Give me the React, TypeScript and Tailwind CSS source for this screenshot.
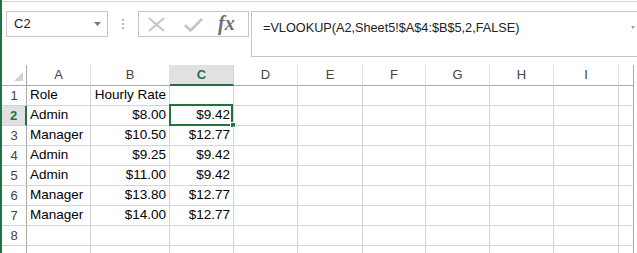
import React from 'react';

const COLS = ['A', 'B', 'C', 'D', 'E', 'F', 'G', 'H', 'I', ''];

const ROWS: Array<[string, string, string]> = [
  ['Role', 'Hourly Rate', ''],
  ['Admin', '$8.00', '$9.42'],
  ['Manager', '$10.50', '$12.77'],
  ['Admin', '$9.25', '$9.42'],
  ['Admin', '$11.00', '$9.42'],
  ['Manager', '$13.80', '$12.77'],
  ['Manager', '$14.00', '$12.77'],
  ['', '', ''],
  ['', '', ''],
];

const cellFont = { fontFamily: '"Liberation Sans", Arial, sans-serif' };

const FormulaBar = () => (
  <div className="flex items-start pt-[9px] h-[64px] border-t border-[#d5d5d5]">
    {/* name box */}
    <div className="ml-[4px] w-[102px] h-[26px] border border-[#c6c6c6] flex items-center justify-between pl-[7px] pr-[6px]">
      <span className="text-[13px] text-[#222]" style={cellFont}>C2</span>
      <svg width="7" height="4" viewBox="0 0 7 4">
        <path d="M0 0 L7 0 L3.5 4 Z" fill="#777" />
      </svg>
    </div>
    {/* grip dots */}
    <div className="ml-[14px] h-[26px] flex flex-col justify-center gap-[2px]">
      <div className="w-[2px] h-[2px] bg-[#b5b5b5]" />
      <div className="w-[2px] h-[2px] bg-[#b5b5b5]" />
      <div className="w-[2px] h-[2px] bg-[#b5b5b5]" />
    </div>
    {/* cancel / enter / fx */}
    <div className="ml-[14px] w-[111px] h-[26px] border border-[#c6c6c6] flex items-center">
      <svg className="ml-[9px]" width="17" height="15" viewBox="0 0 17 15">
        <path d="M1 1 L16 14 M16 1 L1 14" stroke="#c4c4c4" strokeWidth="2" fill="none" />
      </svg>
      <svg className="ml-[19px]" width="19" height="15" viewBox="0 0 19 15">
        <path d="M1 8 L6.5 13.5 L18 2" stroke="#c4c4c4" strokeWidth="2.6" fill="none" />
      </svg>
      <span
        className="ml-[15px] -mt-[2px] text-[20px] italic font-bold text-[#6f6f6f] leading-none"
        style={{ fontFamily: '"Liberation Serif", "Times New Roman", serif' }}
      >
        fx
      </span>
    </div>
    {/* formula */}
    <div className="ml-[2px] flex-1 h-[46px] border border-[#c6c6c6] border-r-0 relative">
      <div className="pl-[11px] pt-[7px] text-[12.7px] text-[#222]" style={cellFont}>
        =VLOOKUP(A2,Sheet5!$A$4:$B$5,2,FALSE)
      </div>
      <svg className="absolute right-[2px] top-[14px]" width="4" height="3" viewBox="0 0 4 3">
        <path d="M0 0 L4 0 L2 3 Z" fill="#999" />
      </svg>
    </div>
  </div>
);

const App = () => {
  return (
    <div className="w-[637px] h-[253px] bg-white border-l-2 border-[#217346] overflow-hidden pt-[1px]">
      <FormulaBar />
      <div
        className="grid grid-cols-[25px_64px_79px_64px_64px_65px_63px_64px_64px_65px_15px] text-[13.5px] text-black"
        style={cellFont}
      >
        {/* header row */}
        <div className="h-[21px] border-r border-b border-[#ababab] relative">
          <svg className="absolute right-[3px] bottom-[4px]" width="9" height="9" viewBox="0 0 9 9">
            <path d="M9 0 L9 9 L0 9 Z" fill="#d4d4d4" />
          </svg>
        </div>
        {COLS.map((c, i) => (
          <div
            key={'h' + i}
            className={
              c === 'C'
                ? 'h-[21px] bg-[#e1e1e1] border-r border-[#d4d4d4] border-b-2 border-b-[#217346] flex items-center justify-center text-[#217346] font-bold text-[13px]'
                : i === 9
                  ? 'h-[21px] border-r border-[#ababab] border-b border-b-[#ababab]'
                  : 'h-[21px] border-r border-[#e1e1e1] border-b border-b-[#ababab] flex items-center justify-center text-[#444] text-[13px]'
            }
          >
            {c}
          </div>
        ))}
        {/* data rows; the ninth row is only partly in view */}
        {ROWS.map((r, ri) => {
          const sel = ri === 1;
          return (
            <React.Fragment key={'r' + ri}>
              <div
                className={
                  sel
                    ? 'h-[20px] bg-[#e1e1e1] border-r-2 border-[#217346] border-b border-b-[#d4d4d4] flex items-center justify-center text-[#217346] font-bold text-[13px]'
                    : 'h-[20px] border-r border-[#ababab] border-b border-b-[#d4d4d4] flex items-center justify-center text-[#444] text-[13px]'
                }
              >
                {ri < 8 ? ri + 1 : ''}
              </div>
              <div className="h-[20px] border-r border-b border-[#d4d4d4] flex items-center pl-[3px]">{r[0]}</div>
              <div className="h-[20px] border-r border-b border-[#d4d4d4] flex items-center justify-end pr-[3px]">{r[1]}</div>
              <div className="h-[20px] border-r border-b border-[#d4d4d4] flex items-center justify-end pr-[3px] relative">
                {r[2]}
                {sel && (
                  <>
                    <div className="absolute -left-[1px] -top-[2px] right-0 -bottom-[1px] border-2 border-[#217346]" />
                    <div className="absolute -right-[3px] -bottom-[3px] w-[6px] h-[6px] bg-[#217346] border border-white" />
                  </>
                )}
              </div>
              {[0, 1, 2, 3, 4, 5].map((k) => (
                <div key={k} className="h-[20px] border-r border-b border-[#d4d4d4]" />
              ))}
              <div className="h-[20px] border-r border-r-[#ababab] border-b border-b-[#d4d4d4]" />
            </React.Fragment>
          );
        })}
      </div>
    </div>
  );
};

export default App;
